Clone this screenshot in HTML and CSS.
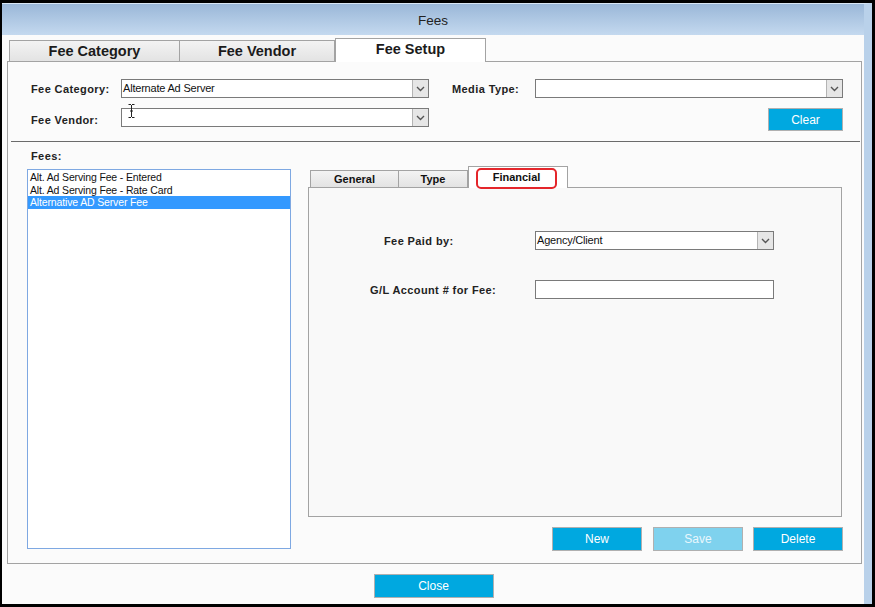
FILE: index.html
```html
<!DOCTYPE html>
<html lang="en">
<head>
    <meta charset="UTF-8">
    <meta name="viewport" content="width=device-width, initial-scale=1.0">
    <title>Fees</title>
    <link rel="stylesheet" href="styles.css">
</head>
<body>
    <div class="window">
        <div class="titlebar">Fees</div>
        <div class="content">
            <div class="tabs">
                <div class="tab">Fee Category</div>
                <div class="tab">Fee Vendor</div>
                <div class="tab active">Fee Setup</div>
            </div>
            <div class="panel">
                <div class="filters">
                    <label class="lbl">Fee Category:</label>
                    <div class="combo">
                        <span class="combo-text">Alternate Ad Server</span>
                        <span class="combo-arrow"><svg width="9" height="6" viewBox="0 0 9 6"><polyline points="1,1 4.5,4.5 8,1" fill="none" stroke="#555" stroke-width="1.4"/></svg></span>
                    </div>
                    <span></span>
                    <label class="lbl">Media Type:</label>
                    <div class="combo">
                        <span class="combo-text"></span>
                        <span class="combo-arrow"><svg width="9" height="6" viewBox="0 0 9 6"><polyline points="1,1 4.5,4.5 8,1" fill="none" stroke="#555" stroke-width="1.4"/></svg></span>
                    </div>

                    <label class="lbl">Fee Vendor:</label>
                    <div class="combo cursor-host">
                        <span class="combo-text"></span>
                        <span class="combo-arrow"><svg width="9" height="6" viewBox="0 0 9 6"><polyline points="1,1 4.5,4.5 8,1" fill="none" stroke="#555" stroke-width="1.4"/></svg></span>
                        <svg class="ibeam" width="7" height="14" viewBox="0 0 7 14"><path d="M0.5 0.5h2.5M4 0.5h2.5M3.5 1v12M0.5 13.5h2.5M4 13.5h2.5M2 7h3" fill="none" stroke="#222" stroke-width="1"/></svg>
                    </div>
                    <span></span>
                    <div class="clear-wrap"><button class="btn clear">Clear</button></div>
                </div>

                <div class="sep"></div>

                <div class="lower">
                    <div class="fees-col">
                        <div class="lbl fees-lbl">Fees:</div>
                        <div class="listbox">
                            <div class="item">Alt. Ad Serving Fee - Entered</div>
                            <div class="item">Alt. Ad Serving Fee - Rate Card</div>
                            <div class="item selected">Alternative AD Server Fee</div>
                        </div>
                    </div>

                    <div class="detail-col">
                        <div class="subtabs">
                            <div class="subtab general">General</div>
                            <div class="subtab type">Type</div>
                            <div class="subtab active"><span class="mark">Financial</span></div>
                        </div>
                        <div class="subpanel">
                            <div class="fin-grid">
                                <label class="lbl paid">Fee Paid by:</label>
                                <div class="combo">
                                    <span class="combo-text">Agency/Client</span>
                                    <span class="combo-arrow"><svg width="9" height="6" viewBox="0 0 9 6"><polyline points="1,1 4.5,4.5 8,1" fill="none" stroke="#555" stroke-width="1.4"/></svg></span>
                                </div>
                                <label class="lbl">G/L Account # for Fee:</label>
                                <div class="textbox"></div>
                            </div>
                        </div>
                        <div class="actions">
                            <button class="btn">New</button>
                            <button class="btn disabled">Save</button>
                            <button class="btn">Delete</button>
                        </div>
                    </div>
                </div>
            </div>
            <div class="footer">
                <button class="btn close">Close</button>
            </div>
        </div>
    </div>
</body>
</html>
```

FILE: styles.css
```css
*{
    box-sizing: border-box;
}
body{
    margin: 0;
    background-color: #000;
    font-family: "Liberation Sans", Arial, sans-serif;
}
.window{
    width: 875px;
    height: 607px;
    padding: 3px 3px 3px 2px;
    background-color: #000;
    display: flex;
    flex-direction: column;
}
.titlebar{
    height: 32px;
    border-top: 1px solid #d8e6f5;
    border-right: 8px solid #b9d1ea;
    background: linear-gradient(#9ab7d8, #c4d9ef);
    text-align: center;
    font-size: 13.5px;
    line-height: 34px;
    color: #222;
}
.content{
    flex: 1;
    background-color: #fbfbfb;
    border-right: 8px solid #b9d1ea;
    padding: 0 2px 0 5px;
    display: flex;
    flex-direction: column;
}

/* top tabs */
.tabs{
    display: flex;
    align-items: flex-end;
    height: 26px;
    padding-left: 2px;
}
.tab{
    width: 171px;
    height: 21px;
    border: 1px solid #a3a3a3;
    border-bottom: none;
    background: linear-gradient(#f3f3f3, #e3e3e3);
    font-weight: bold;
    font-size: 14.5px;
    line-height: 21px;
    text-align: center;
    color: #1b1b1b;
}
.tab + .tab{
    border-left: none;
    width: 155px;
}
.tab.active{
    width: 151px;
    height: 24px;
    margin-bottom: -1px;
    background: #fff;
    border-left: 1px solid #a3a3a3;
    line-height: 20px;
    position: relative;
}
.panel{
    height: 503px;
    border: 1px solid #a3a3a3;
    background-color: #fbfbfb;
}

/* filters */
.lbl{
    font-weight: bold;
    font-size: 11px;
    letter-spacing: 0.4px;
    color: #222;
}
.filters{
    display: grid;
    grid-template-columns: 90px 308px 23px 83px 308px;
    grid-template-rows: 19px 23px;
    row-gap: 10px;
    align-items: center;
    padding: 17px 0 0 23px;
}
.combo{
    height: 19px;
    border: 1px solid #7a7a7a;
    background: #fff;
    display: flex;
    align-items: stretch;
}
.filters .combo{
    align-self: start;
}
.combo-text{
    flex: 1;
    font-size: 11px;
    line-height: 16px;
    padding-left: 1px;
    color: #111;
    letter-spacing: -0.2px;
}
.combo-arrow{
    width: 16px;
    background: #e6e6e6;
    border-left: 1px solid #b4b4b4;
    display: flex;
    align-items: center;
    justify-content: center;
}
.cursor-host{
    position: relative;
}
.ibeam{
    position: absolute;
    left: 6px;
    top: -5px;
}
.clear-wrap{
    grid-column: 4 / 6;
    display: flex;
    justify-content: flex-end;
}
.btn{
    border: 1px solid #b0b0b0;
    background-color: #00a8e0;
    color: #fff;
    font-family: "Liberation Sans", Arial, sans-serif;
    font-size: 12px;
    height: 24px;
    width: 90px;
    padding: 0;
}
.btn.clear{
    width: 75px;
    height: 23px;
}
.btn.disabled{
    background-color: #7fd2ee;
    color: #e9f7fd;
}
.sep{
    height: 1px;
    background-color: #6b6b6b;
    margin: 10px 1px 0 3px;
}

/* lower area */
.lower{
    display: flex;
    gap: 17px;
    padding: 8px 0 0 19px;
}
.fees-lbl{
    line-height: 13px;
    padding-left: 4px;
    margin-bottom: 6px;
}
.listbox{
    width: 264px;
    height: 380px;
    border: 1px solid #7ea8e2;
    background: #fff;
    padding-top: 1px;
}
.item{
    font-size: 10.5px;
    line-height: 12.5px;
    height: 12.5px;
    padding-left: 2px;
    color: #111;
    letter-spacing: -0.15px;
}
.item.selected{
    background-color: #3399ff;
    color: #fff;
}
.detail-col{
    width: 534px;
    padding-top: 16px;
}
.subtabs{
    display: flex;
    align-items: flex-end;
    height: 21px;
    padding-left: 2px;
}
.subtab{
    height: 17px;
    border: 1px solid #a3a3a3;
    border-bottom: none;
    background: linear-gradient(#f3f3f3, #e3e3e3);
    font-weight: bold;
    font-size: 11px;
    line-height: 17px;
    text-align: center;
    color: #111;
}
.subtab.general{
    width: 89px;
}
.subtab.type{
    width: 69px;
    border-left: none;
}
.subtab.active{
    width: 100px;
    height: 22px;
    margin-bottom: -1px;
    background: #fff;
    position: relative;
    padding: 1px 0 0 7px;
}
.mark{
    display: block;
    width: 81px;
    height: 21px;
    border: 2px solid #e4262b;
    border-radius: 5px;
    line-height: 15px;
}
.subpanel{
    height: 330px;
    border: 1px solid #a3a3a3;
    background-color: #f9f9f9;
    padding: 43px 0 0 61px;
}
.fin-grid{
    display: grid;
    grid-template-columns: 165px 239px;
    grid-template-rows: 19px 19px;
    row-gap: 30px;
    align-items: center;
}
.paid{
    padding-left: 14px;
}
.textbox{
    height: 19px;
    border: 1px solid #7a7a7a;
    background: #fff;
}
.actions{
    display: flex;
    justify-content: flex-end;
    gap: 11px;
    margin: 10px -1px 0 0;
}
.actions .btn + .btn + .btn{
    margin-left: -1px;
}
.footer{
    display: flex;
    justify-content: center;
    padding-top: 10px;
    padding-right: 2px;
}
.btn.close{
    width: 120px;
}
```
